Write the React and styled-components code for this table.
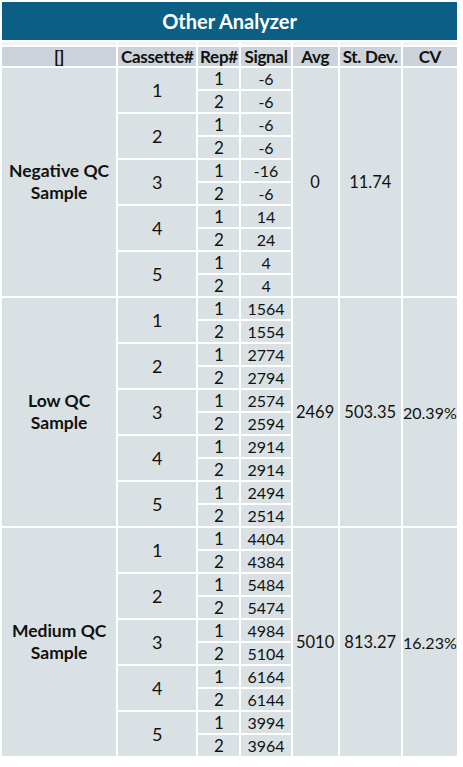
import styled, { createGlobalStyle } from "styled-components"

const GlobalStyle = createGlobalStyle`
  body {
    margin: 0;
    background: #ffffff;
    font-family: Lato, "Open Sans", sans-serif;
  }
`

const Table = styled.table`
  table-layout: fixed;
  width: 459px;
  border-collapse: separate;
  border-spacing: 2px;
  background: #ffffff;
  color: #111;
`

const TitleCell = styled.th`
  height: 38px;
  padding: 0;
  background: #0c5f84;
  color: #ffffff;
  font-size: 20px;
  font-weight: 700;
  text-align: center;
  vertical-align: middle;
`

const SpacerCell = styled.td`
  height: 3px;
  padding: 0;
  background: #f1f3f5;
`

const HeadCell = styled.th`
  height: 19px;
  padding: 0;
  background: #ccd3da;
  font-size: 17px;
  line-height: 19px;
  font-weight: 700;
  text-align: center;
  vertical-align: middle;
  white-space: nowrap;
  letter-spacing: -0.3px;
`

const Cell = styled.td`
  height: 21px;
  padding: 0;
  background: #dae1e4;
  text-align: center;
  vertical-align: middle;
  font-size: ${(p) => p.$size || "16px"};
  font-weight: ${(p) => (p.$bold ? 700 : 400)};
  line-height: ${(p) => (p.$bold ? "22px" : "normal")};
  white-space: ${(p) => (p.$bold ? "normal" : "nowrap")};
`

const widths = [114, 78, 41, 49, 45, 61, 54]

const groups = [
  {
    label: ["Negative QC", "Sample"],
    avg: "0",
    sd: "11.74",
    cv: "",
    signals: [["-6", "-6"], ["-6", "-6"], ["-16", "-6"], ["14", "24"], ["4", "4"]],
  },
  {
    label: ["Low QC", "Sample"],
    avg: "2469",
    sd: "503.35",
    cv: "20.39%",
    signals: [["1564", "1554"], ["2774", "2794"], ["2574", "2594"], ["2914", "2914"], ["2494", "2514"]],
  },
  {
    label: ["Medium QC", "Sample"],
    avg: "5010",
    sd: "813.27",
    cv: "16.23%",
    signals: [["4404", "4384"], ["5484", "5474"], ["4984", "5104"], ["6164", "6144"], ["3994", "3964"]],
  },
]

function Group({ group }) {
  const rows = []
  group.signals.forEach((pair, ci) => {
    pair.forEach((signal, ri) => {
      const first = ci === 0 && ri === 0
      rows.push(
        <tr key={`${ci}-${ri}`}>
          {first && (
            <Cell rowSpan={10} $bold $size="17.5px">
              {group.label[0]}
              <br />
              {group.label[1]}
            </Cell>
          )}
          {ri === 0 && (
            <Cell rowSpan={2} $size="18px">
              {ci + 1}
            </Cell>
          )}
          <Cell $size="17px">{ri + 1}</Cell>
          <Cell>{signal}</Cell>
          {first && (
            <>
              <Cell rowSpan={10} $size="16.5px">{group.avg}</Cell>
              <Cell rowSpan={10} $size="16.5px">{group.sd}</Cell>
              <Cell rowSpan={10} $size="16px">{group.cv}</Cell>
            </>
          )}
        </tr>
      )
    })
  })
  return <>{rows}</>
}

export default function App() {
  return (
    <>
      <GlobalStyle />
      <Table>
        <colgroup>
          {widths.map((w, i) => (
            <col key={i} style={{ width: w }} />
          ))}
        </colgroup>
        <thead>
          <tr>
            <TitleCell colSpan={7}>Other Analyzer</TitleCell>
          </tr>
          <tr>
            {widths.map((_, i) => (
              <SpacerCell key={i} />
            ))}
          </tr>
          <tr>
            <HeadCell>[]</HeadCell>
            <HeadCell>Cassette#</HeadCell>
            <HeadCell>Rep#</HeadCell>
            <HeadCell>Signal</HeadCell>
            <HeadCell>Avg</HeadCell>
            <HeadCell>St. Dev.</HeadCell>
            <HeadCell>CV</HeadCell>
          </tr>
        </thead>
        <tbody>
          {groups.map((g, i) => (
            <Group key={i} group={g} />
          ))}
        </tbody>
      </Table>
    </>
  )
}
